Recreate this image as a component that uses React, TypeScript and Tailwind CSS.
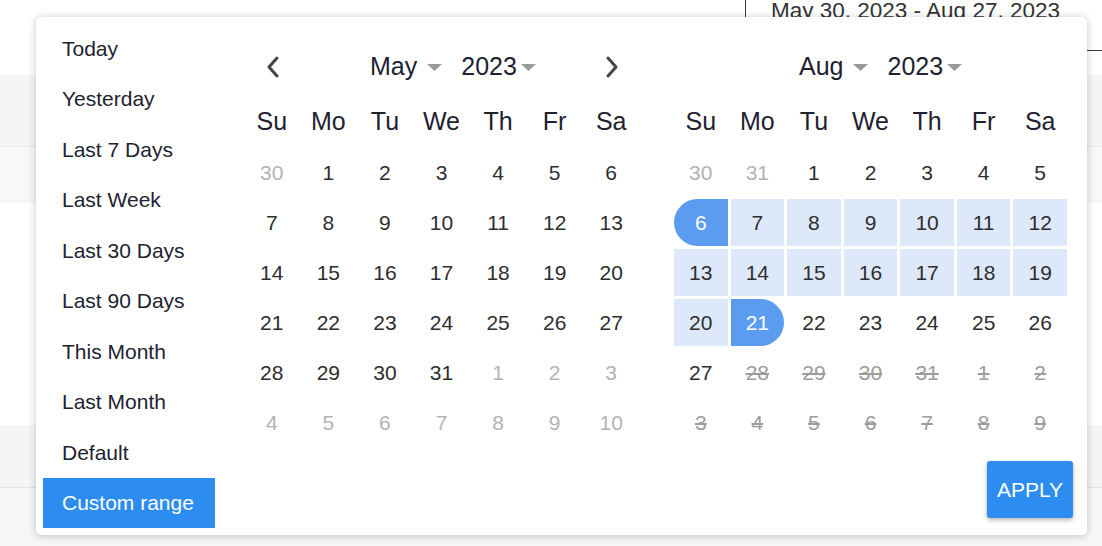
import React from "react";

type Day = { n: number; kind: "other" | "cur" | "dis" | "start" | "end" | "range" };

const weekdays = ["Su", "Mo", "Tu", "We", "Th", "Fr", "Sa"];

function mk(list: (number | [number, Day["kind"]])[], def: Day["kind"]): Day[] {
  return list.map((x) => (Array.isArray(x) ? { n: x[0], kind: x[1] } : { n: x, kind: def }));
}

const may: Day[] = [
  ...mk([[30, "other"], 1, 2, 3, 4, 5, 6], "cur"),
  ...mk([7, 8, 9, 10, 11, 12, 13], "cur"),
  ...mk([14, 15, 16, 17, 18, 19, 20], "cur"),
  ...mk([21, 22, 23, 24, 25, 26, 27], "cur"),
  ...mk([28, 29, 30, 31, [1, "other"], [2, "other"], [3, "other"]], "cur"),
  ...mk([4, 5, 6, 7, 8, 9, 10], "other"),
];

const aug: Day[] = [
  ...mk([[30, "other"], [31, "other"], 1, 2, 3, 4, 5], "cur"),
  ...mk([[6, "start"], 7, 8, 9, 10, 11, 12], "range"),
  ...mk([13, 14, 15, 16, 17, 18, 19], "range"),
  ...mk([[20, "range"], [21, "end"], 22, 23, 24, 25, 26], "cur"),
  ...mk([[27, "cur"], 28, 29, 30, 31, 1, 2], "dis"),
  ...mk([3, 4, 5, 6, 7, 8, 9], "dis"),
];

const presets = [
  "Today",
  "Yesterday",
  "Last 7 Days",
  "Last Week",
  "Last 30 Days",
  "Last 90 Days",
  "This Month",
  "Last Month",
  "Default",
  "Custom range",
];

function Caret() {
  return (
    <svg width="15" height="7" viewBox="0 0 15 7" className="shrink-0">
      <polygon points="0,0 15,0 7.5,7" fill="#9a9a9a" />
    </svg>
  );
}

function Chevron({ dir }: { dir: "l" | "r" }) {
  return (
    <svg width="16" height="24" viewBox="0 0 16 24">
      <polyline
        points={dir === "l" ? "12,3 4,12 12,21" : "4,3 12,12 4,21"}
        fill="none"
        stroke="#454545"
        strokeWidth="3"
        strokeLinecap="round"
        strokeLinejoin="round"
      />
    </svg>
  );
}

function Cell({ d }: { d: Day }) {
  const base = "h-[47px] flex items-center justify-center text-[21px]";
  if (d.kind === "start")
    return <div className={`${base} bg-[#5b9cf0] text-white rounded-l-[24px]`}>{d.n}</div>;
  if (d.kind === "end")
    return <div className={`${base} bg-[#5b9cf0] text-white rounded-r-[24px]`}>{d.n}</div>;
  if (d.kind === "range") return <div className={`${base} bg-[#dde9fb] text-[#2e2e2e]`}>{d.n}</div>;
  if (d.kind === "other") return <div className={`${base} text-[#b3b3b3]`}>{d.n}</div>;
  if (d.kind === "dis") return <div className={`${base} text-[#9c9c9c] line-through`}>{d.n}</div>;
  return <div className={`${base} text-[#2e2e2e]`}>{d.n}</div>;
}

function Calendar({ month, days, nav }: { month: string; days: Day[]; nav: boolean }) {
  return (
    <div className="w-[393px] flex flex-col">
      <div className="h-[58px] flex items-center text-[25px] text-[#1e2230]">
        <div className="w-[125px] shrink-0 flex">
          {nav && (
            <div className="w-[56px] flex justify-center">
              <Chevron dir="l" />
            </div>
          )}
        </div>
        <div className="flex items-center">
          <span>{month}</span>
          <span className="ml-[10px] flex items-center">
            <Caret />
          </span>
        </div>
        <div className="flex items-center ml-[19px]">
          <span>2023</span>
          <span className="ml-[4px] flex items-center">
            <Caret />
          </span>
        </div>
        <div className="flex-1 flex justify-end">
          {nav && (
            <div className="w-[56px] flex justify-center pl-[3px]">
              <Chevron dir="r" />
            </div>
          )}
        </div>
      </div>
      <div className="mt-[2px] grid grid-cols-7 gap-x-[3px] h-[47px] text-[25px] text-[#1e2230]">
        {weekdays.map((w) => (
          <div key={w} className="flex items-center justify-center">
            {w}
          </div>
        ))}
      </div>
      <div className="mt-[4px] grid grid-cols-7 gap-[3px]">
        {days.map((d, i) => (
          <Cell key={i} d={d} />
        ))}
      </div>
    </div>
  );
}

export default function App() {
  return (
    <div
      className="relative w-[1102px] h-[546px] overflow-hidden bg-white"
      style={{ fontFamily: '"Liberation Sans", Arial, sans-serif' }}
    >
      {/* background page */}
      <div className="flex flex-col w-full h-full">
        <div className="h-[75px] flex">
          <div className="ml-auto w-[357px] h-[51px] border-l border-b border-[#3a3a3a] pl-[25px] text-[22.5px] leading-none text-[#333] whitespace-nowrap">
            May 30, 2023 - Aug 27, 2023
          </div>
        </div>
        <div className="h-[72px] bg-[#f5f5f5] border-b border-[#e6e6e6]" />
        <div className="h-[56px] bg-[#f8f8f8]" />
        <div className="h-[222px] bg-white" />
        <div className="h-[63px] bg-[#f5f5f5] border-b border-[#e4e4e4]" />
        <div className="flex-1 bg-[#f7f7f7]" />
      </div>

      {/* popup */}
      <div className="absolute left-[36px] top-[17px] w-[1051px] h-[518px] bg-white rounded-[5px] shadow-[0_1px_8px_rgba(0,0,0,0.22)] flex">
        <div className="w-[186px] shrink-0 pt-[6px] px-[7px] flex flex-col">
          {presets.map((p, i) => {
            const active = i === presets.length - 1;
            return (
              <div
                key={p}
                className={`h-[50.5px] flex items-center pl-[19px] text-[21px] whitespace-nowrap ${
                  active ? "bg-[#2d8cf0] text-white" : "text-[#1e2230]"
                }`}
              >
                {p}
              </div>
            );
          })}
        </div>
        <div className="flex-1 flex flex-col pt-[21px]">
          <div className="flex pl-[23px] gap-[36px]">
            <Calendar month="May" days={may} nav />
            <Calendar month="Aug" days={aug} nav={false} />
          </div>
          <div className="flex justify-end pr-[14px] mt-[15px]">
            <button className="w-[86px] h-[57px] bg-[#2d8cf0] text-white text-[21px] rounded-[3px] shadow-[0_2px_5px_rgba(0,0,0,0.3)] flex items-center justify-center">
              APPLY
            </button>
          </div>
        </div>
      </div>
    </div>
  );
}
